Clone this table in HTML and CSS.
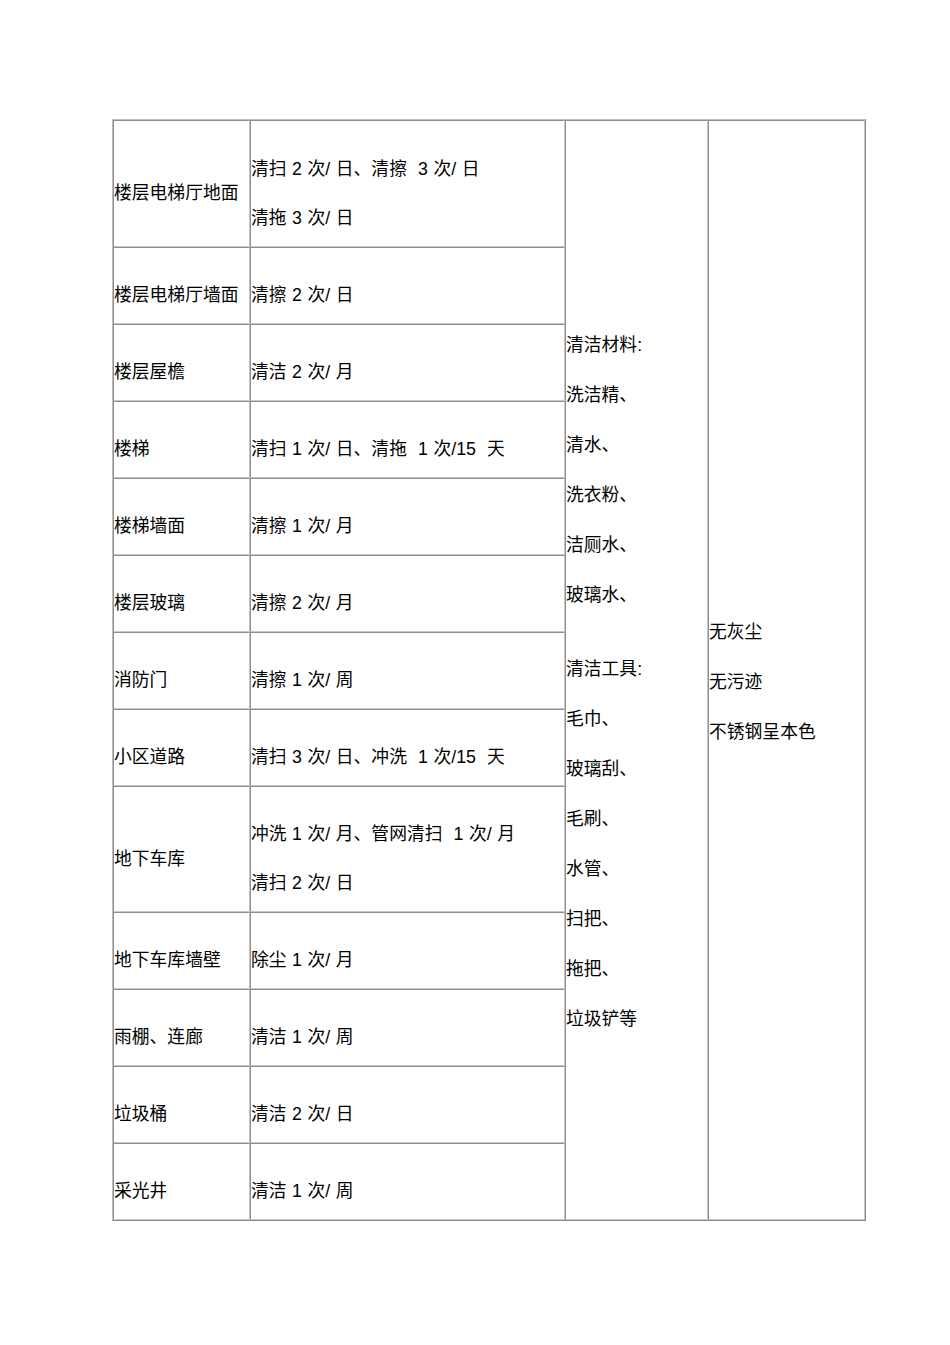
FILE: index.html
```html
<!DOCTYPE html>
<html lang="zh-CN">
<head>
<meta charset="utf-8">
<title>清洁标准</title>
<link rel="stylesheet" href="styles.css">
</head>
<body>
<div class="page">
<table class="grid">
  <colgroup>
    <col class="c1"><col class="c2"><col class="c3"><col class="c4">
  </colgroup>
  <tr class="tall">
    <td class="cell">楼层电梯厅地面</td>
    <td class="cell"><div>清扫 2 次/ 日、清擦&nbsp; 3 次/ 日</div><div>清拖 3 次/ 日</div></td>
    <td class="cell side" rowspan="13">
      <div>清洁材料:</div>
      <div>洗洁精、</div>
      <div>清水、</div>
      <div>洗衣粉、</div>
      <div>洁厕水、</div>
      <div>玻璃水、</div>
      <div class="gap"></div>
      <div>清洁工具:</div>
      <div>毛巾、</div>
      <div>玻璃刮、</div>
      <div>毛刷、</div>
      <div>水管、</div>
      <div>扫把、</div>
      <div>拖把、</div>
      <div>垃圾铲等</div>
    </td>
    <td class="cell side" rowspan="13">
      <div>无灰尘</div>
      <div>无污迹</div>
      <div>不锈钢呈本色</div>
    </td>
  </tr>
  <tr class="row"><td class="cell">楼层电梯厅墙面</td><td class="cell">清擦 2 次/ 日</td></tr>
  <tr class="row"><td class="cell">楼层屋檐</td><td class="cell">清洁 2 次/ 月</td></tr>
  <tr class="row"><td class="cell">楼梯</td><td class="cell">清扫 1 次/ 日、清拖&nbsp; 1 次/15&nbsp; 天</td></tr>
  <tr class="row"><td class="cell">楼梯墙面</td><td class="cell">清擦 1 次/ 月</td></tr>
  <tr class="row"><td class="cell">楼层玻璃</td><td class="cell">清擦 2 次/ 月</td></tr>
  <tr class="row"><td class="cell">消防门</td><td class="cell">清擦 1 次/ 周</td></tr>
  <tr class="row"><td class="cell">小区道路</td><td class="cell">清扫 3 次/ 日、冲洗&nbsp; 1 次/15&nbsp; 天</td></tr>
  <tr class="tall2"><td class="cell">地下车库</td><td class="cell"><div>冲洗 1 次/ 月、管网清扫&nbsp; 1 次/ 月</div><div>清扫 2 次/ 日</div></td></tr>
  <tr class="row"><td class="cell">地下车库墙壁</td><td class="cell">除尘 1 次/ 月</td></tr>
  <tr class="row"><td class="cell">雨棚、连廊</td><td class="cell">清洁 1 次/ 周</td></tr>
  <tr class="row"><td class="cell">垃圾桶</td><td class="cell">清洁 2 次/ 日</td></tr>
  <tr class="row"><td class="cell">采光井</td><td class="cell">清洁 1 次/ 周</td></tr>
</table>
</div>
</body>
</html>
```

FILE: styles.css
```css
html, body {
  margin: 0;
  padding: 0;
  background: #ffffff;
}

.page {
  padding: 119px 0 0 112px;
  font-family: "Liberation Sans", "Noto Sans CJK SC", sans-serif;
  font-size: 17.8px;
  word-spacing: 0.6px;
  color: #000000;
}

.grid {
  border-collapse: separate;
  border-spacing: 0;
  table-layout: fixed;
  width: 754px;
  border-style: solid;
  border-width: 1px;
  border-color: #bdbdbd #8a8a8a #8a8a8a #bdbdbd;
}

.c1 { width: 137px; }
.c2 { width: 315px; }
.c3 { width: 143px; }
.c4 { width: 157px; }

.row { height: 77px; }
.tall { height: 127px; }
.tall2 { height: 126px; }

.cell {
  border-style: solid;
  border-width: 1px;
  border-color: #8e8e8e #c6c6c6 #c6c6c6 #8e8e8e;
  padding: 20px 0 0 0;
  vertical-align: middle;
  line-height: 49px;
  white-space: nowrap;
  overflow: hidden;
}

.side {
  padding-top: 23px;
  line-height: 50px;
}

.gap {
  height: 24px;
}
```
